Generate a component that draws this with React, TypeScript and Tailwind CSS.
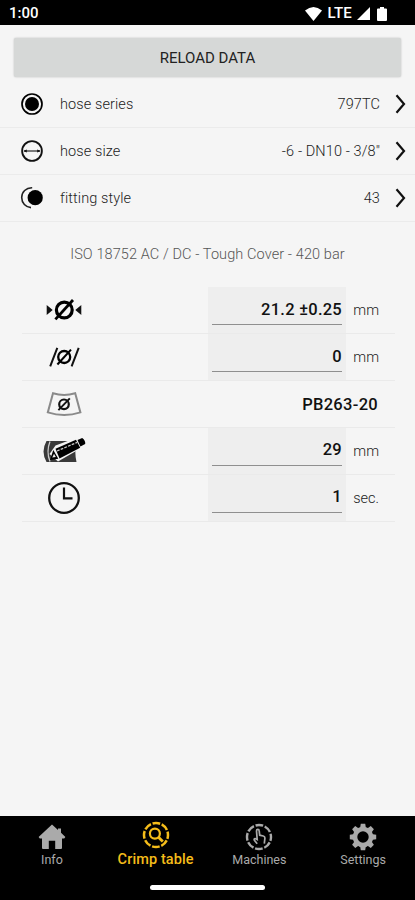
import type { ReactNode } from "react";

type SelectRow = {
  label: string;
  value: string;
  icon: ReactNode;
};

type CrimpRow = {
  name: string;
  value: string;
  unit?: string;
  icon: ReactNode;
};

type Tab = {
  label: string;
  icon: ReactNode;
  active?: boolean;
};

const HoseSeriesIcon = () => (
  <svg width="24" height="24" viewBox="0 0 24 24">
    <circle cx="12" cy="12" r="10" fill="none" stroke="#000" strokeWidth="1.7" />
    <circle cx="12" cy="12" r="7" fill="#000" />
  </svg>
);

const HoseSizeIcon = () => (
  <svg width="24" height="24" viewBox="0 0 24 24">
    <circle cx="12" cy="12" r="9.9" fill="none" stroke="#111" strokeWidth="1.8" />
    <path d="M4 12h16" stroke="#111" strokeWidth="1.1" />
    <path d="M3.2 12l3.6-1.5v3zM20.8 12l-3.6-1.5v3z" fill="#111" />
  </svg>
);

const FittingStyleIcon = () => (
  <svg width="24" height="24" viewBox="0 0 24 24">
    <path d="M12.2 1.8C6 1.6 1.7 6 1.7 11.6c0 5.4 4 9.8 9.3 10" fill="none" stroke="#222" strokeWidth="1.6" />
    <circle cx="15.2" cy="11.7" r="7.6" fill="#000" />
  </svg>
);

const CrimpDiameterIcon = () => (
  <svg width="38" height="24" viewBox="0 0 38 24">
    <path d="M1.7 7l6 5-6 5zM36.3 7l-6 5 6 5z" fill="#111" />
    <circle cx="19.3" cy="12" r="7.9" fill="none" stroke="#000" strokeWidth="3.2" />
    <path d="M10.4 21.4L28 2" stroke="#000" strokeWidth="2.8" />
  </svg>
);

const CorrectionIcon = () => (
  <svg width="38" height="24" viewBox="0 0 38 24">
    <path d="M5.2 21.4L12.3 2.8M26.6 21.4L33.7 2.8" stroke="#111" strokeWidth="2" />
    <circle cx="19.2" cy="12" r="6" fill="none" stroke="#000" strokeWidth="2.3" />
    <path d="M12.4 19.5L26 4.6" stroke="#000" strokeWidth="2.1" />
  </svg>
);

const DieIcon = () => (
  <svg width="38" height="28" viewBox="0 0 38 28">
    <path d="M8 3.2q11 3.4 22.2 0l5.2 19.2q-16.2 5.2-32.6 0z" fill="none" stroke="#8a8a8a" strokeWidth="2" />
    <circle cx="19" cy="14.3" r="4.8" fill="none" stroke="#111" strokeWidth="2.2" />
    <path d="M13.4 20.2L24.8 8.4" stroke="#111" strokeWidth="1.9" />
  </svg>
);

const InsertionDepthIcon = () => (
  <svg width="46" height="28" viewBox="0 0 46 28">
    <path d="M5.5 4H36q-3 10.5-.5 21h-30Q-.5 14.500 5.500 4z" fill="#3a3a3a" />
    <path d="M9 4.500q-4 10 0 20" fill="none" stroke="#ccc" strokeWidth="1.300" />
    <path d="M8.500 17L14.500 8.500 36 .5l6 9.400L17 24.500z" fill="#f5f5f5" />
    <path d="M9 23l3.300-10 5 8.800z" fill="#000" />
    <path d="M14.500 11.700L35 2.700l4.200 8L18.500 21.600z" fill="#000" />
    <path d="M16 14L36.300 5.300" stroke="#ccc" strokeWidth="1.300" strokeDasharray="2.800 1.200" />
    <path d="M11.300 20.400l1.700-3.600 1.800 3.200z" fill="#eee" />
    <path d="M36.500 3l4.700-2q3.400 2.400 3 6l-4.800 2.600z" fill="#000" />
  </svg>
);

const ClockIcon = () => (
  <svg width="34" height="34" viewBox="0 0 34 34">
    <circle cx="17" cy="17" r="14.8" fill="none" stroke="#111" strokeWidth="2.3" />
    <path d="M17 6.5v10.8h8.5" fill="none" stroke="#111" strokeWidth="2.2" />
  </svg>
);

const ChevronIcon = () => (
  <svg width="11" height="20" viewBox="0 0 11 20">
    <path d="M1.5 1.3L9 10l-7.5 8.7" fill="none" stroke="#111" strokeWidth="2.2" />
  </svg>
);

const HomeIcon = () => (
  <svg width="28" height="28" viewBox="0 0 28 28" fill="#aaa">
    <path d="M14 1.5L.6 14l1.2 1.6H4V25q0 1 1 1h5.8v-8.2h6.4V26H23q1 0 1-1v-9.4h2.2l1.2-1.6-4.4-4.2V5.6h-3v1.5z" />
  </svg>
);

const CrimpTableIcon = () => (
  <svg width="28" height="28" viewBox="0 0 28 28" fill="none" stroke="#f5bd1a">
    <circle cx="14" cy="14" r="12" strokeWidth="2.5" strokeDasharray="7.7 1.725" strokeDashoffset="3.85" />
    <circle cx="12.9" cy="12.6" r="5" strokeWidth="2.2" />
    <path d="M16.5 16.2l4.3 4.4" strokeWidth="2.8" />
  </svg>
);

const MachinesIcon = () => (
  <svg width="28" height="28" viewBox="0 0 28 28" fill="none" stroke="#aaa">
    <circle cx="14" cy="14" r="12" strokeWidth="2.4" strokeDasharray="7.7 1.725" strokeDashoffset="3.85" />
    <path
      d="M12.2 20.8L9.4 17.400q-.8-1.600.8-1.800l2 1-.7-8.600q0-1.600 1.300-1.600t1.400 1.500l.5 4.300 3.600.8q1.700.4 1.600 2.100l-.6 5.500"
      strokeWidth="1.7"
    />
  </svg>
);

const SettingsIcon = () => (
  <svg width="28" height="28" viewBox="0 0 28 28">
    <circle cx="14" cy="14" r="8" fill="none" stroke="#aaa" strokeWidth="4.6" />
    {[0, 45, 90, 135, 180, 225, 270, 315].map((angle) => (
      <path key={angle} d="M11 5.5L11.8.8h4.4l.8 4.7z" fill="#aaa" transform={`rotate(${angle} 14 14)`} />
    ))}
  </svg>
);

const selectRows: SelectRow[] = [
  { label: "hose series", value: "797TC", icon: <HoseSeriesIcon /> },
  { label: "hose size", value: "-6 - DN10 - 3/8\"", icon: <HoseSizeIcon /> },
  { label: "fitting style", value: "43", icon: <FittingStyleIcon /> },
];

const crimpRows: CrimpRow[] = [
  { name: "diameter", value: "21.2 ±0.25", unit: "mm", icon: <CrimpDiameterIcon /> },
  { name: "correction", value: "0", unit: "mm", icon: <CorrectionIcon /> },
  { name: "die", value: "PB263-20", icon: <DieIcon /> },
  { name: "depth", value: "29", unit: "mm", icon: <InsertionDepthIcon /> },
  { name: "time", value: "1", unit: "sec.", icon: <ClockIcon /> },
];

const tabs: Tab[] = [
  { label: "Info", icon: <HomeIcon /> },
  { label: "Crimp table", icon: <CrimpTableIcon />, active: true },
  { label: "Machines", icon: <MachinesIcon /> },
  { label: "Settings", icon: <SettingsIcon /> },
];

function StatusBar() {
  return (
    <header className="flex h-[25px] shrink-0 items-center justify-between bg-black pl-[9px] pr-[28px] pt-[2px] text-white">
      <span className="text-[15px] font-medium">1:00</span>
      <div className="flex items-center">
        <svg width="17" height="14" viewBox="0 0 17 14" className="mr-[6px]">
          <path d="M0 3.5q8.5-7 17 0L8.5 14z" fill="#fff" />
        </svg>
        <span className="text-[15px] font-medium tracking-[0.2px]">LTE</span>
        <svg width="13" height="13" viewBox="0 0 13 13" className="ml-[5px]">
          <path d="M13 0v13H0z" fill="#fff" />
        </svg>
        <svg width="10" height="14" viewBox="0 0 10 14" className="ml-[7px]">
          <path d="M3 0h4v1.6h2q1 0 1 1V13q0 1-1 1H1q-1 0-1-1V2.6q0-1 1-1h2z" fill="#fff" />
        </svg>
      </div>
    </header>
  );
}

export default function App() {
  return (
    <div className="flex h-[900px] w-[415px] flex-col overflow-hidden bg-[#f5f5f5] font-['Roboto',sans-serif] text-[#222]">
      <StatusBar />

      <main className="flex-1">
        <div className="px-[14px] pt-[13px]">
          <button className="h-[39px] w-full rounded-[2px] bg-[#d6d8d7] pt-[2px] text-[15px] text-[#222] shadow-[0_0_2px_#bbb]">
            RELOAD DATA
          </button>
        </div>

        <div className="mt-[4px]">
          {selectRows.map((row) => (
            <div key={row.label} className="flex h-[46.9px] items-center border-b border-[#ebebeb] pl-[20px] pr-[9px] text-[14.5px] font-light">
              {row.icon}
              <span className="ml-4 flex-1 pt-[2px] tracking-[0.1px]">{row.label}</span>
              <span className="mr-[15px] pt-[2px] tracking-[0.1px]">{row.value}</span>
              <ChevronIcon />
            </div>
          ))}
        </div>

        <p className="mt-[22px] text-center text-[14.5px] leading-[21px] font-light tracking-[0.1px] text-[#555]">
          ISO 18752 AC / DC - Tough Cover - 420 bar
        </p>

        <div className="mt-[22.5px] ml-[22px] w-[373px]">
          {crimpRows.map((row) => (
            <div key={row.name} className="flex h-[46.9px] border-b border-[#eaeaea]">
              <div className="flex w-[84px] items-center justify-center">{row.icon}</div>
              {row.unit ? (
                <>
                  <div className="ml-auto w-[138px] bg-[#eeeeee] px-[4px]">
                    <div className="flex h-[38px] items-center justify-end border-b border-[#8f8f8f] pt-[9px] text-[16.5px] font-medium tracking-[0.25px] text-[#111]">
                      {row.value}
                    </div>
                  </div>
                  <span className="flex w-[49px] items-center justify-end pt-[2px] pr-[16px] text-[14.5px] font-light">{row.unit}</span>
                </>
              ) : (
                <span className="ml-auto flex items-center pt-[2px] pr-[17px] text-[16.5px] font-medium tracking-[0.3px] text-[#111]">{row.value}</span>
              )}
            </div>
          ))}
        </div>
      </main>

      <nav className="flex h-[84px] shrink-0 flex-col bg-black">
        <div className="flex pt-[5px]">
          {tabs.map((tab) => (
            <div
              key={tab.label}
              className={
                tab.active
                  ? "flex flex-1 flex-col items-center gap-[2px] text-[14.5px] font-medium tracking-[0.1px] text-[#f5bd1a]"
                  : "flex flex-1 flex-col items-center pt-[2px] text-[12.5px] text-[#aaa]"
              }
            >
              {tab.icon}
              <span className="leading-[18px]">{tab.label}</span>
            </div>
          ))}
        </div>
        <div className="mx-auto mt-auto mb-[10px] h-[5px] w-[115px] rounded-full bg-white" />
      </nav>
    </div>
  );
}
